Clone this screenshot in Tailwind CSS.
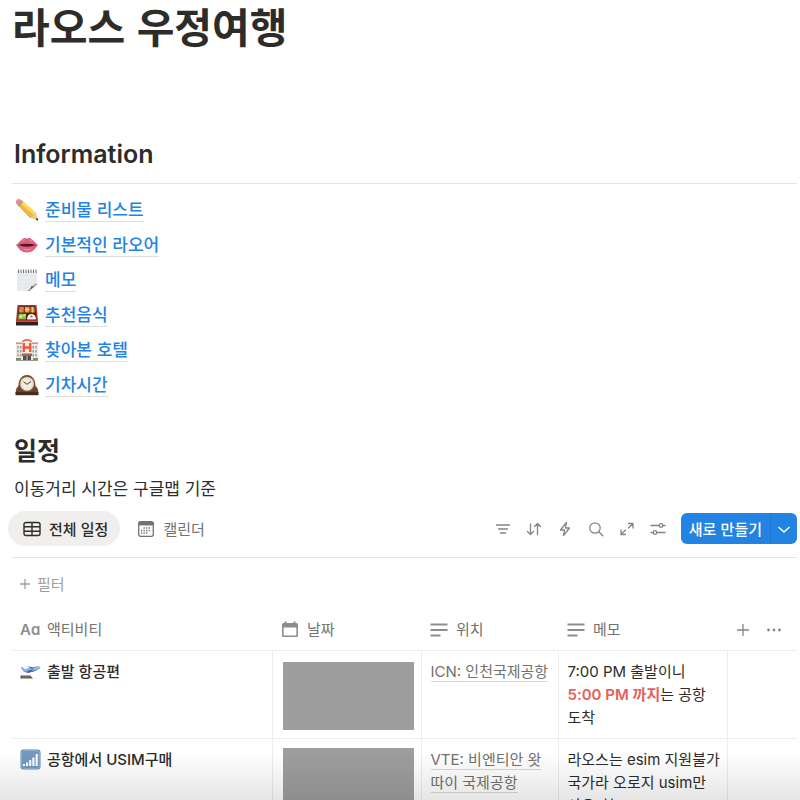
<!DOCTYPE html>
<html lang="ko">
<head>
    <meta charset="UTF-8">
    <meta name="viewport" content="width=device-width, initial-scale=1.0">
    <title>라오스 우정여행</title>
    <script src="https://cdn.jsdelivr.net/npm/@tailwindcss/browser@4"></script>
</head>
<body class="h-screen overflow-hidden bg-white font-['Inter','Noto_Sans_CJK_KR',sans-serif] text-[15px] leading-[23px] text-[#2c2c2b]">
    <main class="pl-3 pr-[3px]">
        <h1 class="font-['Noto_Sans_CJK_KR',sans-serif] text-[41px] leading-[50px] font-bold">라오스 우정여행</h1>

        <h2 class="mt-[86px] border-b border-[#e4e4e2] pb-[11px] pl-[2px] text-[25px] leading-9 font-semibold">Information</h2>

        <!-- Page links -->
        <ul class="mt-2 pl-[3px] font-['Noto_Sans_CJK_KR',sans-serif] text-[17px] leading-[24px] font-medium text-[#2383e2]">
            <li class="flex h-[35px] items-center gap-[6px]">
                <svg class="size-6" viewBox="0 0 24 24">
                    <path d="M1.500 5.500 6 1.500l15 13.500-4 5z" fill="#f6b92f"/>
                    <path d="M3.500 3.500 6 1.500l15 13.500-2 2z" fill="#ffd968"/>
                    <path d="M3 7.500 1.500 5.500l15 14-1 .5z" fill="#d98a18"/>
                    <path d="M.8 5Q.5 1.500 4 .8l2.500 2-4.200 4z" fill="#ee8d8b"/>
                    <path d="m2.200 6.700 4.200-4.200 1.800 1.600L4 8.300z" fill="#9ba3a6"/>
                    <path d="m15.800 20 5-5.500 2.400 8z" fill="#edc897"/>
                    <path d="m20.500 21.500 2-1.800.8 3z" fill="#3a3532"/>
                </svg>
                <a href="#" class="border-b border-[#dededc]">준비물 리스트</a>
            </li>
            <li class="flex h-[35px] items-center gap-[6px]">
                <svg class="size-6" viewBox="0 0 24 24">
                    <path d="M1 12c3-2 5-5.500 8-7 1.500-.4 2 .6 3 .6s1.500-1 3-.6c3 1.500 5 5 8 7-3 4.500-6 7.500-11 7.500S4 16.500 1 12z" fill="#dd5f7a"/>
                    <path d="M3 12q9-2.500 18 0-9 3.500-18 0z" fill="#561525"/>
                    <path d="M7 15.500q5 2 10 0-5 4-10 0z" fill="#f5a5b4"/>
                    <path d="M6.500 9q2-2.500 3.500-2.300M14 7q2 .3 3.500 2" stroke="#ef93a5" fill="none"/>
                </svg>
                <a href="#" class="border-b border-[#dededc]">기본적인 라오어</a>
            </li>
            <li class="flex h-[35px] items-center gap-[6px]">
                <svg class="size-6" viewBox="0 0 24 24">
                    <path d="M2 2.500h20v14l-7 6.500H2z" fill="#e9ebed"/>
                    <path d="M2 8h20M2 12h20M2 16h18M2 20h15" stroke="#dcdfe2" stroke-width=".5"/>
                    <path d="M22 15.500v1L14 23h-2q4-1 4-5 4 1 6-2.500z" fill="#5e6368"/>
                    <path d="M16 18q4 1 6-3-2 1-3 1-1 2-3 2z" fill="#b8bec3"/>
                    <path d="M3.500 1.500v3.500M6 1.500v3.500M8.500 1.500v3.500M11 1.500v3.500M13.500 1.500v3.500M16 1.500v3.500M18.500 1.500v3.500M21 1.500v3.500" stroke="#73787c" stroke-width="1"/>
                </svg>
                <a href="#" class="border-b border-[#dededc]">메모</a>
            </li>
            <li class="flex h-[35px] items-center gap-[6px]">
                <svg class="size-6" viewBox="0 0 24 24">
                    <path d="M1 18h22v4.500H1z" fill="#33201e"/>
                    <path d="M2.500 2h19L23 18.500H1z" fill="#b23228"/>
                    <path d="M4 3.500h16l1.500 13.500h-19z" fill="#3b231f"/>
                    <path d="M4.500 4h4.300l-.3 5.500H4z" fill="#e9b04a"/>
                    <path d="M5.800 4v5.500M7.300 4v5.500" stroke="#b84a2c" stroke-width=".6"/>
                    <path d="M9.800 4h4.700v5.500H9.800z" fill="#f7a437"/>
                    <path d="M9.800 6.500h4.700" stroke="#fbe0a0"/>
                    <path d="M15.500 4h3.800l.6 5.500h-4.400z" fill="#ee8a3c"/>
                    <path d="M17.500 4v5.500" stroke="#fbd08a" stroke-width=".8"/>
                    <path d="M3.700 10.800h7.500l-.3 5.700H3z" fill="#86bd49"/>
                    <circle cx="6" cy="13.500" r="1.700" fill="#dbe98a"/>
                    <circle cx="9.300" cy="12.300" r="1.200" fill="#f0d74c"/>
                    <path d="M12 16.500q0-5.500 4.500-5.500t4.500 5.500z" fill="#f4f1ea"/>
                    <circle cx="16.500" cy="13.500" r="1" fill="#d94135"/>
                    <path d="M1 18.500h22" stroke="#d34d38"/>
                </svg>
                <a href="#" class="border-b border-[#dededc]">추천음식</a>
            </li>
            <li class="flex h-[35px] items-center gap-[6px]">
                <svg class="size-6" viewBox="0 0 24 24">
                    <path d="M1 5h6V3q5-4 10 0v2h6v17H1z" fill="#f2e9e0"/>
                    <path d="M1 4.500h6v1.300H1zM17 4.500h6v1.300h-6zM7 3q5-4 10 0v1.200q-5-3-10 0z" fill="#d36e58"/>
                    <path d="M3 8v11M5.800 8v11M18.200 8v11M21 8v11" stroke="#8b9aa2" stroke-width="1.400" stroke-dasharray="2.500 1.500"/>
                    <path d="M8.800 5v9M15.200 5v9M8.800 9.500h6.400" stroke="#ee5536" stroke-width="2.300" fill="none"/>
                    <path d="M7 15.500h10V18H7z" fill="#b0604e"/>
                    <path d="M8 18h8v4H8z" fill="#48525a"/>
                    <path d="M12 18v4" stroke="#d8cbb4"/>
                    <path d="M1 20h5v2H1zM18 20h5v2h-5z" fill="#759553"/>
                    <path d="M1 22h22v1H1z" fill="#9b9691"/>
                </svg>
                <a href="#" class="border-b border-[#dededc]">찾아본 호텔</a>
            </li>
            <li class="flex h-[35px] items-center gap-[6px]">
                <svg class="size-6" viewBox="0 0 24 24">
                    <path d="M.8 21v-3.500q.5-3 2.700-4.500C3.500 6 7 2 12 2s8.500 4 8.500 11q2.200 1.500 2.700 4.500V21z" fill="#6b4432"/>
                    <path d="M.5 19h23v3.200H.5z" fill="#452b22"/>
                    <circle cx="12" cy="10.800" r="7.400" fill="#b08a58"/>
                    <circle cx="12" cy="10.800" r="6.600" fill="#f3ecdc"/>
                    <circle cx="12" cy="10.800" r="5.400" fill="none" stroke="#b5ab96" stroke-width=".7" stroke-dasharray=".7 2.130"/>
                    <path d="M8.500 8.800 12 11.300l4-2.800" fill="none" stroke="#2f2a27" stroke-width=".9"/>
                </svg>
                <a href="#" class="border-b border-[#dededc]">기차시간</a>
            </li>
        </ul>

        <h2 class="mt-[29px] pl-[2px] font-['Noto_Sans_CJK_KR',sans-serif] text-[25px] leading-9 font-bold">일정</h2>
        <p class="mt-2 pl-[2px] font-['Noto_Sans_CJK_KR',sans-serif] text-[17px] leading-[26px]">이동거리 시간은 구글맵 기준</p>

        <!-- View tabs and toolbar -->
        <div class="mt-[10px] flex items-center justify-between border-b border-[#e4e4e2] pb-[11px] font-['Noto_Sans_CJK_KR',sans-serif]">
            <div class="-ml-1 flex items-center">
                <button class="flex h-[35px] items-center gap-2 rounded-full bg-[#f0efed] pr-3 pl-[15px] font-medium">
                    <svg class="size-[18px]" viewBox="0 0 18 18" fill="none" stroke="currentColor" stroke-width="1.400">
                        <rect x="1" y="2.500" width="16" height="13" rx="2"/>
                        <path d="M1 6.800h16M1 11.200h16M9 2.500v13"/>
                    </svg>
                    전체 일정
                </button>
                <button class="flex h-[35px] items-center gap-2 pl-[17px] text-[#73726e]">
                    <svg class="size-[18px]" viewBox="0 0 18 18" fill="none" stroke="currentColor">
                        <rect x="1.700" y="1.700" width="14.600" height="14.600" rx="2" stroke-width="1.300"/>
                        <path d="M1.700 3.700h14.600" stroke-width="3.500"/>
                        <path d="M6.500 8h7M4 10.500h10M4 13h7" stroke-width="1.300" stroke-dasharray="1.300 1.200"/>
                    </svg>
                    캘린더
                </button>
            </div>
            <div class="flex items-center gap-[15px] text-[#858481]">
                <button aria-label="필터">
                    <svg class="size-4" viewBox="0 0 16 16" fill="none" stroke="currentColor" stroke-width="1.300" stroke-linecap="round"><path d="M1.500 4h13M3.500 8h9M5.500 12h5"/></svg>
                </button>
                <button aria-label="정렬">
                    <svg class="size-4" viewBox="0 0 16 16" fill="none" stroke="currentColor" stroke-width="1.300" stroke-linecap="round" stroke-linejoin="round"><path d="M4.500 3v10.500M1.500 10.500l3 3 3-3M11.500 13.500V2.500M8.500 5.500l3-3 3 3"/></svg>
                </button>
                <button aria-label="자동화">
                    <svg class="size-4" viewBox="0 0 16 16" fill="none" stroke="currentColor" stroke-width="1.300" stroke-linejoin="round"><path d="M9.500 1.500 3.500 9h4l-1 5.500L12.500 7h-4z"/></svg>
                </button>
                <button aria-label="검색">
                    <svg class="size-4" viewBox="0 0 16 16" fill="none" stroke="currentColor" stroke-width="1.300" stroke-linecap="round"><circle cx="7" cy="7" r="5.200"/><path d="m10.800 10.800 4 4"/></svg>
                </button>
                <button aria-label="전체 페이지로 열기">
                    <svg class="size-4" viewBox="0 0 16 16" fill="none" stroke="currentColor" stroke-width="1.300" stroke-linecap="round" stroke-linejoin="round"><path d="M9.500 2.500h4.500V7M14 2.500 9.500 7M6.500 13.500H2V9M2 13.500 6.500 9"/></svg>
                </button>
                <button aria-label="설정">
                    <svg class="size-4" viewBox="0 0 16 16" fill="none" stroke="currentColor" stroke-width="1.300" stroke-linecap="round"><path d="M1 4.500h8M13 4.500h2M1 11.500h2M7 11.500h8"/><circle cx="11" cy="4.500" r="1.800"/><circle cx="5" cy="11.500" r="1.800"/></svg>
                </button>
                <div class="flex h-[31px] items-center overflow-hidden rounded-md bg-[#2383e2] text-white">
                    <button class="h-full px-2 font-medium">새로 만들기</button>
                    <button aria-label="더 보기" class="flex h-full items-center border-l border-[#1f76cc] px-[6px]">
                        <svg class="size-[14px]" viewBox="0 0 14 14" fill="none" stroke="currentColor" stroke-width="1.500" stroke-linecap="round" stroke-linejoin="round"><path d="m2 5.500 5 4.500 5-4.500"/></svg>
                    </button>
                </div>
            </div>
        </div>

        <button class="mt-[14px] flex items-center gap-[6px] pl-[7px] font-['Noto_Sans_CJK_KR',sans-serif] text-[#a19f9b]">
            <svg class="size-3" viewBox="0 0 12 12" fill="none" stroke="currentColor" stroke-width="1.300"><path d="M6 1v10M1 6h10"/></svg>
            필터
        </button>

        <!-- Schedule table -->
        <table class="mt-[15px] w-full table-fixed border-collapse text-left align-top">
            <thead class="text-[#73726e]">
                <tr class="h-10 border-b border-[#ededeb]">
                    <th class="w-[260px] pl-2 font-normal">
                        <span class="flex items-center gap-[7px]">
                            <span class="w-5 font-semibold text-[#8e8d89]" aria-hidden="true">Aɑ</span>
                            액티비티
                        </span>
                    </th>
                    <th class="w-[149px] pl-[9px] font-normal">
                        <span class="flex items-center gap-2">
                            <svg class="size-[18px] text-[#8e8d89]" viewBox="0 0 18 18" fill="currentColor"><path fill-rule="evenodd" d="M3.500 .5h2V2h7V.5h2V2h1q1.500 0 1.500 1.500v11q0 1.500-1.500 1.500h-13Q1 16 1 14.500v-11Q1 2 2.500 2h1zM2.600 6.500v7q0 .9.900.9h11q.9 0 .9-.9v-7z"/></svg>
                            날짜
                        </span>
                    </th>
                    <th class="w-[137px] pl-[9px] font-normal">
                        <span class="flex items-center gap-2">
                            <svg class="size-[18px] text-[#8e8d89]" viewBox="0 0 18 18" fill="none" stroke="currentColor" stroke-width="1.800"><path d="M.5 3.500h17M.5 9h17M.5 14.500h10"/></svg>
                            위치
                        </span>
                    </th>
                    <th class="w-[169px] pl-[9px] font-normal">
                        <span class="flex items-center gap-2">
                            <svg class="size-[18px] text-[#8e8d89]" viewBox="0 0 18 18" fill="none" stroke="currentColor" stroke-width="1.800"><path d="M.5 3.500h17M.5 9h17M.5 14.500h10"/></svg>
                            메모
                        </span>
                    </th>
                    <th class="pl-[9px] font-normal text-[#858481]">
                        <span class="flex items-center gap-[17px]">
                            <button aria-label="속성 추가"><svg class="size-[14px]" viewBox="0 0 14 14" fill="none" stroke="currentColor" stroke-width="1.300"><path d="M7 1v12M1 7h12"/></svg></button>
                            <button aria-label="속성 메뉴"><svg class="size-[14px]" viewBox="0 0 14 14" fill="currentColor"><circle cx="1.500" cy="7" r="1.400"/><circle cx="7" cy="7" r="1.400"/><circle cx="12.500" cy="7" r="1.400"/></svg></button>
                        </span>
                    </th>
                </tr>
            </thead>
            <tbody>
                <tr class="border-b border-[#ededeb] align-top">
                    <td class="border-r border-[#ededeb] py-[9px] pl-2 font-medium">
                        <span class="flex items-center gap-[6px]">
                            <svg class="size-[21px]" viewBox="0 0 21 21">
                                <path d="M1 7q-.5-1.500 1-1.200L5 8l10-2.500q4.500-1 5.500.8 0 1.700-4 2.700L7 11q-3 .3-4-.8z" fill="#8fb4e0"/>
                                <path d="M7.500 5.500h2l5 1.200-3 1zM8 9.500l6-1.500-4.500 3.800H7z" fill="#3c70b5"/>
                                <path d="M4 10.700q7 0 14-2.200-5 3.500-12 3z" fill="#3d5e91"/>
                                <path d="M.5 14.500h9.500l3 3H.5z" fill="#5c5753"/>
                                <path d="M3 15.500v1M5.500 15.500v1M8 15.500v1" stroke="#b4aca6"/>
                            </svg>
                            출발 항공편
                        </span>
                    </td>
                    <td class="border-r border-[#ededeb] pt-[11px] pr-[7px] pl-[10px]"><div class="h-[68px] bg-[#9e9e9e]"></div></td>
                    <td class="border-r border-[#ededeb] py-[9px] pl-[9px] whitespace-nowrap text-[#73726e]"><a href="#" class="border-b border-[#d8d8d6]">ICN: 인천국제공항</a></td>
                    <td class="border-r border-[#ededeb] py-[9px] pl-[9px] whitespace-nowrap">7:00 PM 출발이니<br><strong class="font-semibold text-[#e5615a]">5:00 PM 까지</strong>는 공항<br>도착</td>
                    <td></td>
                </tr>
                <tr class="border-b border-[#ededeb] align-top">
                    <td class="border-r border-[#ededeb] py-[9px] pl-2 font-medium">
                        <span class="flex items-center gap-[6px]">
                            <svg class="size-[21px]" viewBox="0 0 21 21">
                                <rect x=".5" y=".5" width="20" height="20" rx="3" fill="#5f87ae"/>
                                <rect x="1.500" y="1.500" width="18" height="18" rx="2.500" fill="#7399bf" stroke="#a8c1d8" stroke-width=".6"/>
                                <path d="M4 15v2M7.100 13.500V17M10.200 11V17M13.400 8.500V17M16.700 5V17" stroke="#fff" stroke-width="2.100"/>
                            </svg>
                            공항에서 USIM구매
                        </span>
                    </td>
                    <td class="border-r border-[#ededeb] pt-[9px] pr-[7px] pl-[10px]"><div class="h-[68px] bg-[#9e9e9e]"></div></td>
                    <td class="border-r border-[#ededeb] py-[9px] pl-[9px] whitespace-nowrap text-[#73726e]"><a href="#" class="border-b border-[#d8d8d6]">VTE: 비엔티안 왓<br>따이 국제공항</a></td>
                    <td class="border-r border-[#ededeb] py-[9px] pl-[9px] whitespace-nowrap">라오스는 esim 지원불가<br>국가라 오로지 usim만<br>사용가능</td>
                    <td></td>
                </tr>
            </tbody>
        </table>
    </main>

    <!-- Shade along the bottom edge of the window -->
    <div class="pointer-events-none fixed inset-x-0 bottom-0 h-12 bg-linear-to-b from-transparent to-black/10"></div>
</body>
</html>
